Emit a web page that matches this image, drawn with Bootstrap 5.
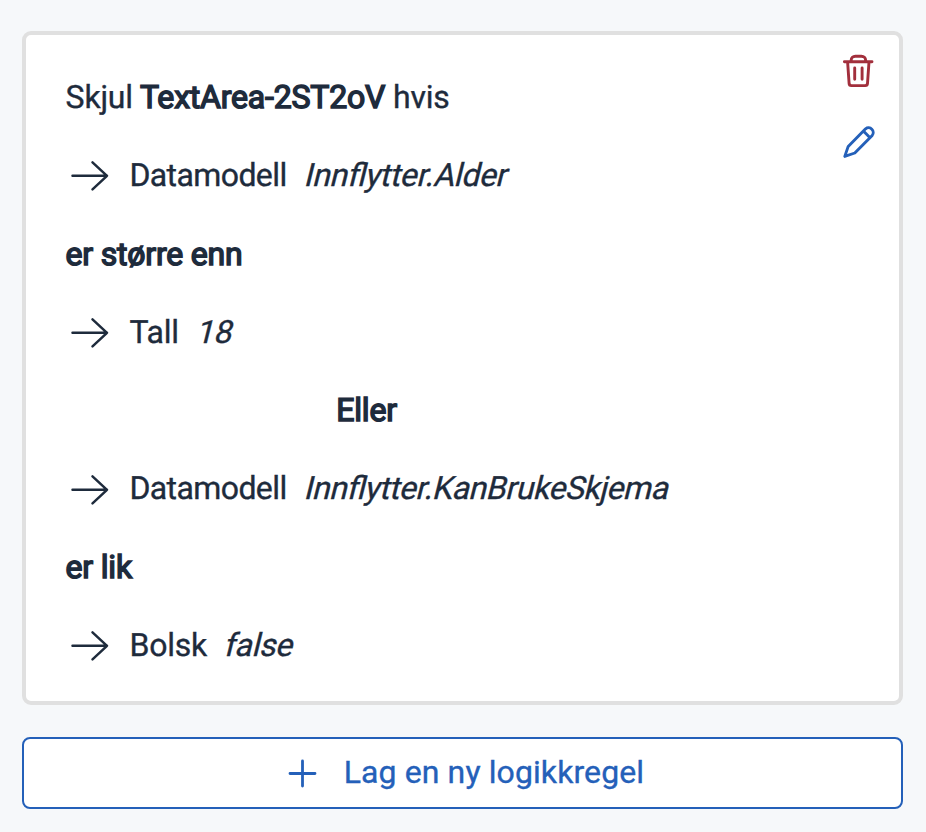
<!DOCTYPE html>
<html lang="nb">
<head>
<meta charset="utf-8">
<meta name="viewport" content="width=device-width, initial-scale=1">
<title>Logikkregler</title>
<link href="https://cdn.jsdelivr.net/npm/bootstrap@5.3.0/dist/css/bootstrap.min.css" rel="stylesheet">
<style>
body { background: #f6f8fa; color: #1e2b3c; font: 400 32px Roboto, "Liberation Sans", sans-serif; text-rendering: geometricPrecision; font-feature-settings: "liga" 1; -webkit-text-stroke: .35px currentColor; }
.page-wrap { padding: 31px 23px 23px 22px; gap: 32px; }
.rule-card { --bs-card-color: #1e2b3c; height: 674px; border: 4px solid #e0e0e0; border-radius: 9px; padding: 23px 17px 0 39.6px; background: #fff; }
.rule-line { height: 78.3px; line-height: 78.3px; white-space: pre; letter-spacing: -.2px; }
.arrow-icon { width: 48px; height: 48px; margin-right: 16.4px; margin-left: -.6px; }
.heavy { -webkit-text-stroke: 1.5px currentColor; }
.model-label { letter-spacing: -.6px; }
.slanted { display: inline-block; transform: skewX(-14deg); margin-left: 19px; letter-spacing: -.32px; }
.model-path { letter-spacing: -.44px; }
.or-line { width: 602px; }
.tools { margin-top: -11px; gap: 23px; }
.tool-btn { width: 48px; height: 48px; }
.tool-delete { color: #a22f3c; }
.tool-edit { color: #2460b9; }
.add-btn { --bs-btn-color: #2460b9; --bs-btn-bg: #fff; --bs-btn-border-color: #2460b9; --bs-btn-border-width: 2px; --bs-btn-border-radius: 8px; --bs-btn-font-size: 32px; --bs-btn-line-height: 1; height: 72px; gap: 21px; letter-spacing: .1px; padding-left: 14px; }
.add-label { padding-bottom: 2px; }
</style>
</head>
<body>
<svg class="d-none">
  <symbol id="arrow" viewBox="0 0 48 48"><path d="M7.5 24.8H42M27.5 11.3 42 24.8 27.5 38.3" fill="none" stroke="currentColor" stroke-width="2.5" stroke-linecap="round" stroke-linejoin="round"/></symbol>
</svg>
<main class="page-wrap d-flex flex-column">
  <section class="rule-card card flex-row justify-content-between">
    <div>
      <div class="rule-line">Skjul <span class="heavy">TextArea-2ST2oV</span> hvis</div>
      <div class="rule-line d-flex align-items-center"><svg class="arrow-icon"><use href="#arrow"/></svg><span class="model-label">Datamodell</span><span class="slanted">Innflytter.Alder</span></div>
      <div class="rule-line heavy">er større enn</div>
      <div class="rule-line d-flex align-items-center"><svg class="arrow-icon"><use href="#arrow"/></svg><span>Tall</span><span class="slanted">18</span></div>
      <div class="rule-line or-line text-center heavy">Eller</div>
      <div class="rule-line d-flex align-items-center"><svg class="arrow-icon"><use href="#arrow"/></svg><span class="model-label">Datamodell</span><span class="slanted model-path">Innflytter.KanBrukeSkjema</span></div>
      <div class="rule-line heavy">er lik</div>
      <div class="rule-line d-flex align-items-center"><svg class="arrow-icon"><use href="#arrow"/></svg><span>Bolsk</span><span class="slanted">false</span></div>
    </div>
    <div class="tools d-flex flex-column">
      <button type="button" class="tool-btn tool-delete btn p-0 border-0 d-flex" aria-label="Slett">
        <svg width="48" height="48" viewBox="0 0 48 48" fill="none" stroke="currentColor" stroke-width="2.9" stroke-linecap="round" stroke-linejoin="round"><path d="M10.4 14.8H38M17.2 14.8v-1.7c0-2.2 1.7-3.9 4.2-3.9h6c2.5 0 4.2 1.7 4.2 3.9v1.7M13.6 14.8l1.5 21.6a2.3 2.3 0 0 0 2.3 2.2h13.8a2.3 2.3 0 0 0 2.3-2.2L35 14.8M20.7 20.9v11.4M28.1 20.9v11.4"/></svg>
      </button>
      <button type="button" class="tool-btn tool-edit btn p-0 border-0 d-flex" aria-label="Rediger">
        <svg width="48" height="48" viewBox="0 0 48 48" fill="none" stroke="currentColor" stroke-width="2.9" stroke-linecap="round" stroke-linejoin="round"><path d="M10.8 38.4 14.2 28.4 31.6 10.8a4.7 4.7 0 0 1 6.6 6.6L20.8 35 10.8 38.4zM29.4 13 35.8 19.5"/></svg>
      </button>
    </div>
  </section>
  <button type="button" class="add-btn btn w-100 d-flex align-items-center justify-content-center">
    <svg width="40" height="40" viewBox="0 0 40 40" fill="none" stroke="currentColor" stroke-width="2.8" stroke-linecap="round"><path d="M7 20.5H32M19.5 8V33"/></svg>
    <span class="add-label">Lag en ny logikkregel</span>
  </button>
</main>
<script src="https://cdn.jsdelivr.net/npm/bootstrap@5.3.0/dist/js/bootstrap.bundle.min.js"></script>
</body>
</html>
